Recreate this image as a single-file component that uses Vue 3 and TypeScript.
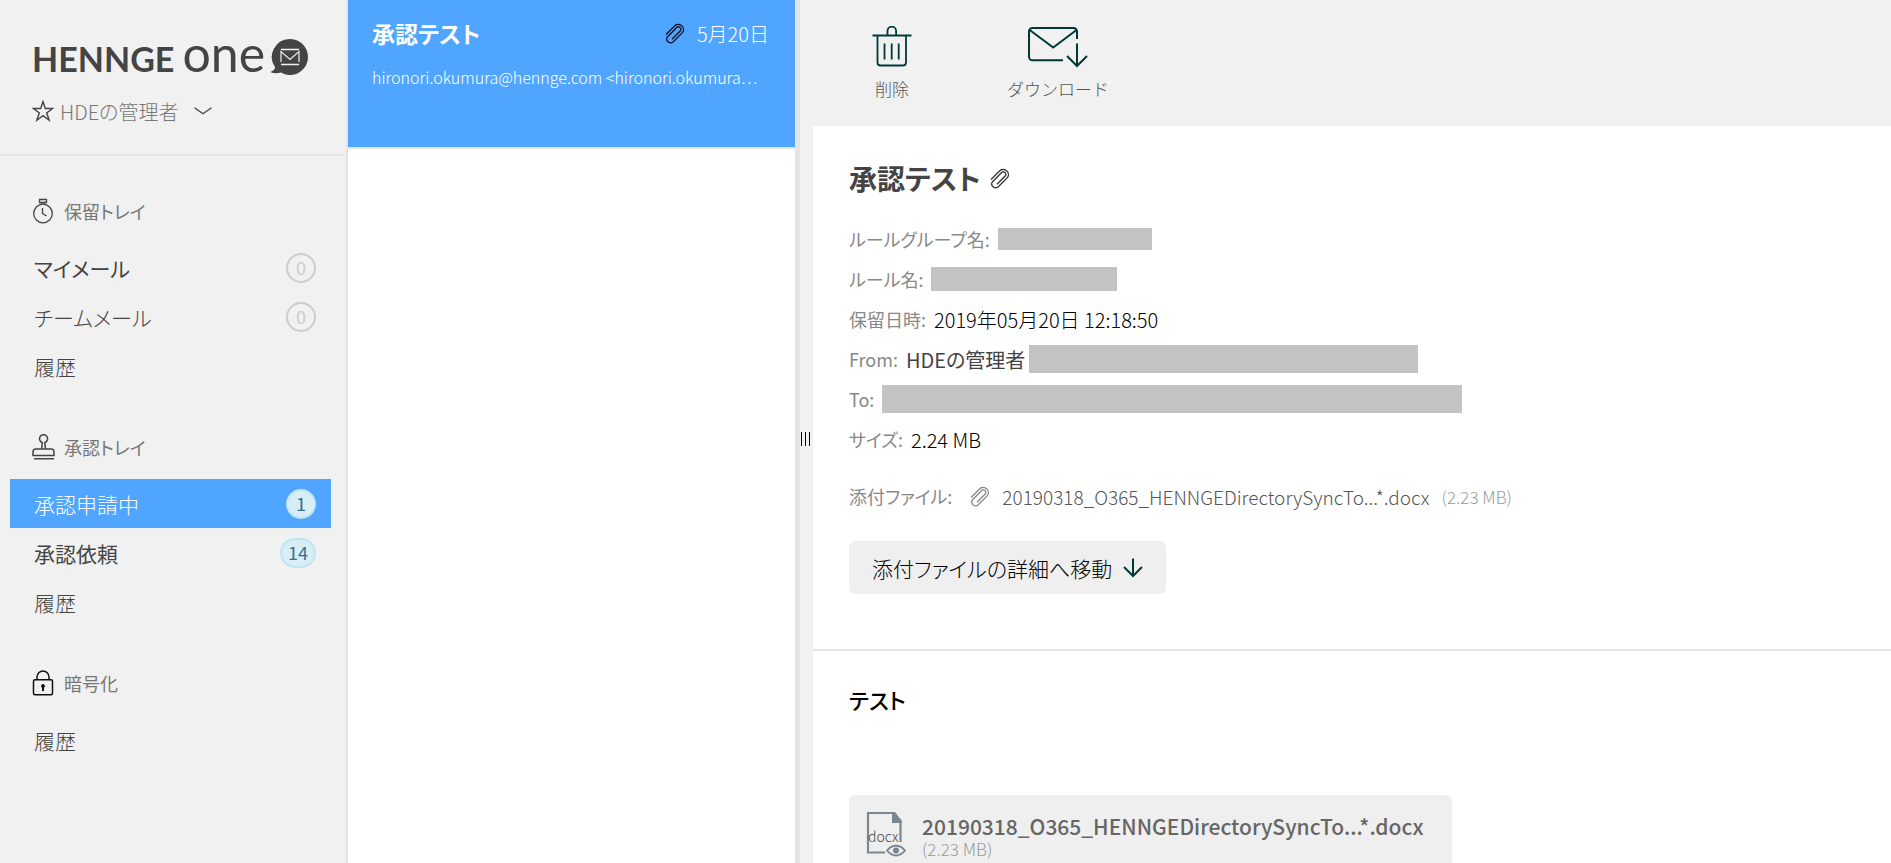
<script setup lang="ts">
import { ref } from 'vue'

interface NavItem {
  id: string
  label: string
  count?: number
  bold?: boolean
}
interface NavSection {
  icon: 'clock' | 'stamp' | 'lock'
  title: string
  items: NavItem[]
}

const sections: NavSection[] = [
  {
    icon: 'clock',
    title: '保留トレイ',
    items: [
      { id: 'my', label: 'マイメール', count: 0, bold: true },
      { id: 'team', label: 'チームメール', count: 0 },
      { id: 'hold-history', label: '履歴' },
    ],
  },
  {
    icon: 'stamp',
    title: '承認トレイ',
    items: [
      { id: 'pending', label: '承認申請中', count: 1 },
      { id: 'requests', label: '承認依頼', count: 14, bold: true },
      { id: 'approval-history', label: '履歴' },
    ],
  },
  {
    icon: 'lock',
    title: '暗号化',
    items: [{ id: 'crypt-history', label: '履歴' }],
  },
]

const active = ref('pending')

interface Detail {
  label: string
  value?: string
  person?: string
  mask?: string
}
const details: Detail[] = [
  { label: 'ルールグループ名:', mask: 'mask-group' },
  { label: 'ルール名:', mask: 'mask-rule' },
  { label: '保留日時:', value: '2019年05月20日 12:18:50' },
  { label: 'From:', person: 'HDEの管理者', mask: 'mask-from' },
  { label: 'To:', mask: 'mask-to' },
  { label: 'サイズ:', value: '2.24 MB' },
]
const fileName = '20190318_O365_HENNGEDirectorySyncTo...*.docx'
</script>

<template>
  <div class="app">
    <aside class="sidebar">
      <header class="brand">
        <div class="logo">
          <span class="logo-main">HENNGE</span>
          <span class="logo-sub">one</span>
          <svg class="logo-mark" width="38" height="37" viewBox="0 0 38 37" aria-hidden="true">
            <path d="M20 0a18 18 0 1 1-9 33.600C7.500 34.600 4 34.500 0 33c3-1 4.500-2 5.200-4.500A18 18 0 0 1 20 0z" fill="#444" />
            <path d="M11 10.500h18M11 25.500h18" stroke="#f1f1f1" stroke-width="1.500" />
            <path d="M11 23V12.500l9 8 9-8V23" fill="none" stroke="#f1f1f1" stroke-width="1.200" />
          </svg>
        </div>
        <button class="account" type="button">
          <svg width="22" height="22" viewBox="0 0 22 22" aria-hidden="true">
            <path d="M11 1.500l2.300 7h7.200l-5.800 4.400 2.500 7.300-6.200-4.500-6.200 4.500 2.500-7.300L1.500 8.500h7.200z" fill="none" stroke="#444" stroke-width="1.400" />
          </svg>
          <span class="account-name">HDEの管理者</span>
          <svg class="chevron" width="18" height="8" viewBox="0 0 18 8" aria-hidden="true">
            <path d="M.5.700L9 6.800l8.500-6.100" fill="none" stroke="#444" stroke-width="1.300" />
          </svg>
        </button>
      </header>

      <nav class="nav">
        <section v-for="s in sections" :key="s.title" class="nav-section">
          <h2 class="nav-title">
            <svg v-if="s.icon === 'clock'" width="24" height="26" viewBox="0 0 24 26" aria-hidden="true">
              <g fill="none" stroke="#444" stroke-width="1.300">
                <circle cx="11" cy="15.500" r="9.300" />
                <path d="M7.500 1.500h7v3h-7zM9.500 4.500v2M12.500 4.500v2M10.500 10v5.500l4 2.500" />
              </g>
            </svg>
            <svg v-else-if="s.icon === 'stamp'" width="24" height="26" viewBox="0 0 24 26" aria-hidden="true">
              <g fill="none" stroke="#444" stroke-width="1.500">
                <path d="M9.700 15l.6-6.500a4 4 0 1 1 2.500 0l.7 6.500" />
                <path d="M1 21.500v-3.500c0-1.800 1-3 2.800-3h15.400c1.800 0 2.800 1.200 2.800 3v3.500zM2 24.700h20" />
              </g>
            </svg>
            <svg v-else width="24" height="26" viewBox="0 0 24 26" aria-hidden="true">
              <g fill="none" stroke="#111" stroke-width="1.500">
                <rect x="1.500" y="9.800" width="19" height="15" rx="1.500" />
                <path d="M5 9.800V7a6 6 0 0 1 12 0v2.800" />
              </g>
              <path d="M11 14a2 2 0 0 1 1 3.700V21h-2v-3.300a2 2 0 0 1 1-3.700z" fill="#111" />
            </svg>
            {{ s.title }}
          </h2>
          <ul class="nav-list">
            <li v-for="item in s.items" :key="item.id">
              <button
                type="button"
                class="nav-item"
                :class="{ active: active === item.id, strong: item.bold }"
                @click="active = item.id"
              >
                <span>{{ item.label }}</span>
                <span v-if="item.count !== undefined" class="badge" :class="{ filled: item.count > 0 }">{{ item.count }}</span>
              </button>
            </li>
          </ul>
        </section>
      </nav>
    </aside>

    <section class="mail-list">
      <article class="mail">
        <div class="mail-top">
          <h3 class="mail-subject">承認テスト</h3>
          <svg class="clip dark" width="20" height="21" viewBox="0 0 20 21" aria-hidden="true">
            <path d="M1 11.500L9.300 3.200a5.200 5.200 0 0 1 8.300 6.200L8.300 18.700a3.900 3.900 0 0 1-6.200-4.500L11.200 5a2.500 2.500 0 0 1 4.200 2.800L7 16.300" />
          </svg>
          <time class="mail-date" datetime="2019-05-20">5月20日</time>
        </div>
        <p class="mail-from">hironori.okumura@hennge.com &lt;hironori.okumura…</p>
      </article>
    </section>

    <div class="splitter" role="separator" aria-orientation="vertical">
      <span class="grip"></span>
    </div>

    <main class="content">
      <div class="toolbar">
        <button type="button" class="tool">
          <svg width="40" height="42" viewBox="0 0 40 42" aria-hidden="true">
            <g fill="none" stroke="#003838" stroke-width="1.800">
              <path d="M.5 9.500h39M15.500 9.500V5a4.200 4.200 0 0 1 8.600 0v4.500" />
              <path d="M5.500 9.500v27a3 3 0 0 0 3 3h22.500a3 3 0 0 0 3-3v-27" />
              <path d="M12.500 17.500v16M19.700 17.500v16M26.700 17.500v16" />
            </g>
          </svg>
          <span>削除</span>
        </button>
        <button type="button" class="tool">
          <svg width="60" height="42" viewBox="0 0 60 42" aria-hidden="true">
            <g fill="none" stroke="#003838" stroke-width="2">
              <path d="M35 34.200H4.500a3.500 3.500 0 0 1-3.500-3.500V5.500A3.500 3.500 0 0 1 4.500 2h41A3.500 3.500 0 0 1 49 5.500V13" />
              <path d="M1.700 4l23.500 17.500L48.500 4M49 17.500v22M39 30l10 10 10-10" />
            </g>
          </svg>
          <span>ダウンロード</span>
        </button>
      </div>

      <div class="message">
        <section class="summary">
          <h1 class="subject">
            承認テスト
            <svg class="clip" width="20" height="21" viewBox="0 0 20 21" aria-hidden="true">
              <path d="M1 11.500L9.300 3.200a5.200 5.200 0 0 1 8.300 6.200L8.300 18.700a3.900 3.900 0 0 1-6.200-4.500L11.200 5a2.500 2.500 0 0 1 4.200 2.800L7 16.300" />
            </svg>
          </h1>
          <dl class="details">
            <div v-for="d in details" :key="d.label" class="detail">
              <dt>{{ d.label }}</dt>
              <dd>
                <span v-if="d.value">{{ d.value }}</span>
                <span v-if="d.person" class="person">{{ d.person }}</span>
                <span v-if="d.mask" class="mask" :class="d.mask"></span>
              </dd>
            </div>
          </dl>
          <div class="attachment">
            <span class="attachment-label">添付ファイル:</span>
            <svg class="clip light" width="20" height="21" viewBox="0 0 20 21" aria-hidden="true">
              <path d="M1 11.500L9.300 3.200a5.200 5.200 0 0 1 8.300 6.200L8.300 18.700a3.900 3.900 0 0 1-6.200-4.500L11.200 5a2.500 2.500 0 0 1 4.200 2.800L7 16.300" />
            </svg>
            <a href="#file" class="attachment-name">{{ fileName }}</a>
            <span class="size">(2.23 MB)</span>
          </div>
          <button type="button" class="jump">
            添付ファイルの詳細へ移動
            <svg width="20" height="20" viewBox="0 0 20 20" aria-hidden="true">
              <path d="M10 .5v17.500M1 9l9 9 9-9" fill="none" stroke="#003838" stroke-width="2" />
            </svg>
          </button>
        </section>
        <section class="body">
          <p class="body-text">テスト</p>
          <div id="file" class="file">
            <svg width="40" height="46" viewBox="0 0 40 46" aria-hidden="true">
              <path d="M19 41.500H2V2h26l6.500 8v21" fill="none" stroke="#7d8794" stroke-width="2.200" />
              <path d="M26 1h3l6.700 9V12H26z" fill="#7d8794" />
              <path d="M21 39.500c5-6.500 13-6.500 18 0-5 6.500-13 6.500-18 0z" fill="#efefef" stroke="#7d8794" stroke-width="2" />
              <circle cx="30" cy="39.500" r="3" fill="#7d8794" />
              <text x="2" y="31" class="file-ext">docx</text>
            </svg>
            <div class="file-info">
              <span class="file-name">{{ fileName }}</span>
              <span class="size">(2.23 MB)</span>
            </div>
          </div>
        </section>
      </div>
    </main>
  </div>
</template>

<style>
html,
body {
  margin: 0;
  overflow: hidden;
}
</style>

<style scoped>
.app {
  display: flex;
  height: 100vh;
  overflow: hidden;
  background: #f1f1f1;
  color: #444;
  font-family: "Noto Sans CJK JP", sans-serif;
  font-feature-settings: "palt";
  font-size: 18px;
  font-weight: 300;
}
button {
  border: 0;
  padding: 0;
  background: none;
  color: inherit;
  font: inherit;
  font-feature-settings: inherit;
  cursor: pointer;
}
h1,
h2,
h3,
p,
ul,
dl,
dd {
  margin: 0;
  padding: 0;
}
svg {
  display: block;
  flex: none;
}

.sidebar {
  flex: none;
  width: 346px;
  border-right: 2px solid #e5e5e5;
}
.brand {
  box-sizing: border-box;
  height: 156px;
  padding: 38px 32px 0;
  border-bottom: 2px solid #e5e5e5;
}
.logo {
  display: flex;
  align-items: baseline;
  height: 38px;
  color: #444;
  font-family: Lato, sans-serif;
  line-height: 30px;
}
.logo-main {
  font-size: 34px;
  font-weight: 700;
}
.logo-sub {
  margin-left: 8px;
  font-size: 50px;
  font-weight: 400;
}
.logo-mark {
  align-self: center;
  margin-left: 5px;
}
.account {
  display: flex;
  align-items: center;
  height: 30px;
  margin-top: 20px;
  font-size: 20px;
  color: #777;
}
.account-name {
  margin-left: 6px;
}
.chevron {
  margin-left: 16px;
}
.nav {
  display: flex;
  flex-direction: column;
  gap: 40px;
  padding: 38px 15px 0 10px;
}
.nav-title {
  display: flex;
  align-items: center;
  gap: 8px;
  height: 34px;
  margin: 0 0 15px 22px;
  color: #777;
  font-size: 18px;
  font-weight: 400;
}
.nav-list {
  list-style: none;
}
.nav-item {
  display: flex;
  align-items: center;
  justify-content: space-between;
  width: 100%;
  height: 49px;
  padding: 0 15px 0 24px;
  font-size: 21px;
  line-height: 28px;
}
.nav-item.strong {
  font-weight: 400;
}
.nav-item.active {
  background: #4fa5ff;
  color: #fff;
}
.badge {
  box-sizing: border-box;
  min-width: 30px;
  height: 30px;
  padding: 0 6px;
  border: 2px solid #ccc;
  border-radius: 15px;
  color: #ccc;
  font-size: 18px;
  font-weight: 400;
  line-height: 25px;
  text-align: center;
}
.badge.filled {
  border-color: #bde6ef;
  background: #d9edf7;
  color: #31708f;
}

.mail-list {
  flex: none;
  width: 447px;
  background: #fff;
}
.mail {
  box-sizing: border-box;
  height: 149px;
  padding: 17px 26px 0 24px;
  border-bottom: 2px solid #e5e5e5;
  background: #4fa5ff;
  background-clip: padding-box;
  color: #fff;
}
.mail-top {
  display: flex;
  align-items: center;
  height: 32px;
}
.mail-subject {
  flex: 1;
  font-size: 23px;
  font-weight: 700;
}
.mail-date {
  margin-left: 12px;
  font-size: 20px;
}
.mail-from {
  margin-top: 14px;
  overflow: hidden;
  font-size: 16px;
  line-height: 28px;
  text-overflow: ellipsis;
  white-space: nowrap;
}
.clip {
  fill: none;
  stroke: #333;
  stroke-width: 1.3;
}
.clip.dark {
  stroke: #112;
}
.clip.light {
  stroke: #888;
}

.splitter {
  display: flex;
  align-items: center;
  flex: none;
  width: 13px;
  border-left: 5px solid #e5e5e5;
  cursor: col-resize;
}
.grip {
  width: 1px;
  height: 14px;
  margin: 15px 0 0 1px;
  border: solid #000;
  border-width: 0 1px;
  padding: 0 3px;
  background: linear-gradient(#000, #000) center / 1px 100% no-repeat;
}

.content {
  display: flex;
  flex: 1;
  flex-direction: column;
  min-width: 0;
}
.toolbar {
  box-sizing: border-box;
  display: flex;
  flex: none;
  gap: 95px;
  height: 126px;
  padding: 26px 59px 0;
}
.tool {
  display: flex;
  flex-direction: column;
  align-items: center;
  gap: 8px;
  height: 76px;
  font-feature-settings: normal;
  font-size: 17px;
  line-height: 26px;
  color: #555;
}
.message {
  flex: 1;
  overflow: hidden;
  background: #fff;
}
.summary {
  box-sizing: border-box;
  height: 525px;
  padding: 32px 36px 0;
  border-bottom: 2px solid #e5e5e5;
}
.subject {
  display: flex;
  align-items: center;
  gap: 9px;
  height: 40px;
  font-size: 28px;
  font-weight: 700;
}
.details {
  margin-top: 21px;
}
.detail {
  display: flex;
  align-items: center;
  gap: 8px;
  height: 40px;
}
dt,
.attachment-label {
  color: #888;
  font-size: 18px;
  font-weight: 400;
}
dd {
  display: flex;
  align-items: center;
  gap: 4px;
  color: #000;
  font-size: 20px;
}
.person {
  color: #444;
  font-weight: 400;
}
.mask {
  height: 24px;
  background: #c3c3c3;
}
.mask-group {
  width: 154px;
  height: 22px;
}
.mask-rule {
  width: 186px;
}
.mask-from {
  width: 389px;
  height: 28px;
}
.mask-to {
  width: 580px;
  height: 28px;
}
.attachment {
  display: flex;
  align-items: center;
  height: 40px;
  margin-top: 17px;
}
.attachment .clip {
  margin-left: 18px;
}
.attachment-name {
  margin-left: 12px;
  color: #555;
  font-size: 19px;
  text-decoration: none;
}
.size {
  color: #999;
  font-size: 17px;
}
.attachment .size {
  margin-left: 12px;
}
.jump {
  display: flex;
  align-items: center;
  gap: 11px;
  height: 53px;
  margin-top: 25px;
  padding: 0 23px;
  border-radius: 6px;
  background: #efefef;
  color: #000;
  font-size: 21px;
}
.body {
  padding: 31px 36px 0;
}
.body-text {
  color: #000;
  font-size: 22px;
  font-weight: 500;
  line-height: 34px;
}
.file {
  box-sizing: border-box;
  display: flex;
  gap: 16px;
  max-width: 603px;
  height: 88px;
  margin-top: 79px;
  padding: 16px 17px;
  border-radius: 6px;
  background: #efefef;
}
.file-ext {
  fill: #444;
  font-size: 14px;
}
.file-info {
  display: flex;
  flex-direction: column;
}
.file-name {
  color: #666;
  font-size: 21px;
  font-weight: 500;
  line-height: 30px;
}
.file-info .size {
  line-height: 16px;
}
</style>
